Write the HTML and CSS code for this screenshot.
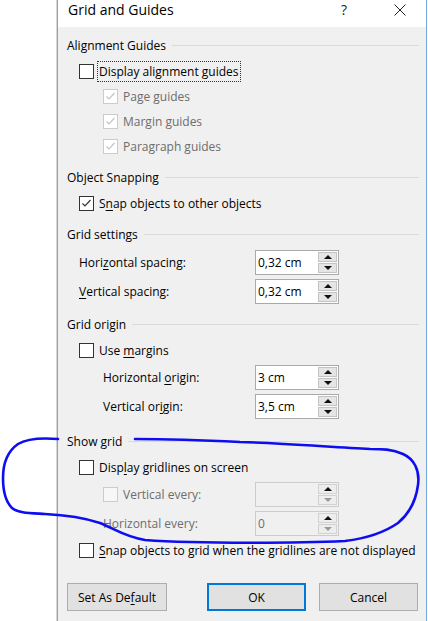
FILE: index.html
```html
<!DOCTYPE html>
<html>
<head>
<meta charset="utf-8">
<link rel="stylesheet" href="styles.css">
</head>
<body>
<div class="screen">
  <div class="strip"></div>
  <div class="dialog">
    <div class="titlebar">
      <span class="title">Grid and Guides</span>
      <span class="help">?</span>
      <svg class="close" width="12" height="12" viewBox="0 0 12 12"><path d="M0.5,0.5 L11.5,11.5 M11.5,0.5 L0.5,11.5" stroke="#222" stroke-width="1" fill="none"/></svg>
    </div>
    <div class="content">
      <section class="group">
        <div class="hdr"><span>Alignment Guides</span></div>
        <div class="cb"><span class="box"></span><span class="focus">Display alignment guides</span></div>
        <div class="cb ind dis"><span class="box"><svg width="13" height="13" viewBox="0 0 13 13"><path d="M2.5,6.5 L5,9 L10.5,3" stroke="#c4c4c4" stroke-width="1.2" fill="none"/></svg></span><span>Page guides</span></div>
        <div class="cb ind dis"><span class="box"><svg width="13" height="13" viewBox="0 0 13 13"><path d="M2.5,6.5 L5,9 L10.5,3" stroke="#c4c4c4" stroke-width="1.2" fill="none"/></svg></span><span>Margin guides</span></div>
        <div class="cb ind dis"><span class="box"><svg width="13" height="13" viewBox="0 0 13 13"><path d="M2.5,6.5 L5,9 L10.5,3" stroke="#c4c4c4" stroke-width="1.2" fill="none"/></svg></span><span>Paragraph guides</span></div>
      </section>
      <section class="group">
        <div class="hdr"><span>Object Snapping</span></div>
        <div class="cb"><span class="box"><svg width="13" height="13" viewBox="0 0 13 13"><path d="M2.5,6.5 L5,9 L10.5,3" stroke="#333" stroke-width="1.2" fill="none"/></svg></span><span>S<u>n</u>ap objects to other objects</span></div>
      </section>
      <section class="group">
        <div class="hdr"><span>Grid settings</span></div>
        <div class="spin">
          <span class="lbl"><span>Hori<u>z</u>ontal spacing:</span></span>
          <div class="field"><span class="val">0,32 cm</span><span class="arrows"><span class="ab"><i class="up"></i></span><span class="ab"><i class="down"></i></span></span></div>
        </div>
        <div class="spin">
          <span class="lbl"><span><u>V</u>ertical spacing:</span></span>
          <div class="field"><span class="val">0,32 cm</span><span class="arrows"><span class="ab"><i class="up"></i></span><span class="ab"><i class="down"></i></span></span></div>
        </div>
      </section>
      <section class="group">
        <div class="hdr"><span>Grid origin</span></div>
        <div class="cb"><span class="box"></span><span>Use <u>m</u>argins</span></div>
        <div class="spin">
          <span class="lbl ind"><span>Horizontal <u>o</u>rigin:</span></span>
          <div class="field"><span class="val">3 cm</span><span class="arrows"><span class="ab"><i class="up"></i></span><span class="ab"><i class="down"></i></span></span></div>
        </div>
        <div class="spin">
          <span class="lbl ind"><span>Vertical or<u>i</u>gin:</span></span>
          <div class="field"><span class="val">3,5 cm</span><span class="arrows"><span class="ab"><i class="up"></i></span><span class="ab"><i class="down"></i></span></span></div>
        </div>
      </section>
      <section class="group last">
        <div class="hdr"><span>Show grid</span></div>
        <div class="cb"><span class="box"></span><span>Disp<u>l</u>ay gridlines on screen</span></div>
        <div class="spin dis">
          <span class="lbl ind"><span class="box"></span><span>Vertical every:</span></span>
          <div class="field"><span class="val"></span><span class="arrows"><span class="ab"><i class="up"></i></span><span class="ab"><i class="down"></i></span></span></div>
        </div>
        <div class="spin dis">
          <span class="lbl ind"><span>Horizontal every:</span></span>
          <div class="field"><span class="val">0</span><span class="arrows"><span class="ab"><i class="up"></i></span><span class="ab"><i class="down"></i></span></span></div>
        </div>
        <div class="cb"><span class="box"></span><span><u>S</u>nap objects to grid when the gridlines are not displayed</span></div>
      </section>
      <div class="buttons">
        <button class="btn">Set As De<u>f</u>ault</button>
        <button class="btn ok">OK</button>
        <button class="btn cancel">Cancel</button>
      </div>
    </div>
  </div>
</div>
<svg class="ink" width="428" height="621" viewBox="0 0 428 621">
  <path d="M58,439 C45,438 28,438 18,444 C8,451 3,463 3,478 C3,492 6,502 12,508 C18,513 30,513 45,514 C65,515 85,518 100,523 C115,529 125,537 145,540 C200,544 300,543 345,541 C370,538 385,532 398,523 C410,513 416,500 418,485 C420,470 414,459 403,454 C392,449 382,449 370,449 C330,447 280,443 240,442 C200,440 160,439 135,439" stroke="#0d0df0" stroke-width="2.6" fill="none" stroke-linecap="round" stroke-linejoin="round"/>
</svg>
</body>
</html>
```

FILE: styles.css
```css
* { box-sizing: border-box; }
html, body { margin: 0; padding: 0; background: #fff; }
body {
  font-family: "Open Sans", "Noto Sans", sans-serif;
  font-size: 12px;
  color: #000;
  width: 428px;
  height: 621px;
  overflow: hidden;
  position: relative;
}
u { text-decoration: underline; text-underline-offset: 2px; }
.screen { display: flex; height: 621px; }
.strip { width: 57px; border-right: 1px solid #d6d6d6; background: #fff; }
.dialog {
  width: 370px;
  height: 621px;
  border-left: 1px solid #72a9e0;
  border-right: 1px solid #72a9e0;
  background: #f0f0f0;
  display: flex;
  flex-direction: column;
}
.titlebar {
  height: 27px;
  background: #fff;
  display: flex;
  align-items: flex-start;
}
.title { flex: 1; padding-left: 10px; font-size: 14px; line-height: 20px; }
.help { width: 12px; text-align: center; font-size: 14px; line-height: 20px; margin-right: 44px; color: #222; }
.close { margin-top: 4px; margin-right: 20px; }
.content { padding: 4px 7px 0 9px; display: flex; flex-direction: column; }
.group + .group { margin-top: 4px; }
.group.last { margin-top: 6px; }
.hdr { height: 28px; display: flex; align-items: center; gap: 6px; }
.hdr::after { content: ""; flex: 1; height: 1px; background: #dadada; }
.cb { height: 25px; display: flex; align-items: center; padding-left: 12px; white-space: nowrap; }
.cb.ind { padding-left: 36px; }
.box {
  width: 15px; height: 15px;
  border: 1px solid #333;
  background: #fff;
  margin-right: 5px;
  display: inline-flex; align-items: center; justify-content: center;
  flex: none;
}
.dis { color: #6d6d6d; }
.dis .box { border-color: #cccccc; background: #fff; }
.spin.dis .box { background: #f7f7f7; }
.focus { outline: 1px dotted #333; outline-offset: 0; padding: 1px 1px; margin-left: -1px; }
.spin { height: 29px; display: flex; align-items: center; }
.lbl { width: 188px; padding-left: 12px; display: flex; align-items: center; white-space: nowrap; }
.lbl.ind { padding-left: 36px; }
.field {
  width: 84px; height: 25px;
  border: 1px solid #aaaaaa;
  background: #fff;
  display: flex; align-items: center;
  padding: 1px 1px 1px 2px;
}
.spin.dis .field { background: #f0f0f0; border-color: #cccccc; }
.val { flex: 1; }
.spin.dis .val { color: #6d6d6d; }
.arrows { width: 19px; height: 21px; display: flex; flex-direction: column; gap: 1px; }
.ab {
  flex: 1;
  background: #e5e5e5;
  border: 1px solid #c3c3c3;
  display: flex; align-items: center; justify-content: center;
}
.spin.dis .ab { background: #ededed; border-color: #d2d2d2; }
.up { width: 0; height: 0; border-left: 4px solid transparent; border-right: 4px solid transparent; border-bottom: 4px solid #111; }
.down { width: 0; height: 0; border-left: 4px solid transparent; border-right: 4px solid transparent; border-top: 4px solid #111; }
.spin.dis .down { border-top-color: #9a9a9a; }
.buttons { display: flex; margin-top: 20px; }
.btn {
  height: 28px;
  width: 99px;
  font-family: inherit;
  font-size: 12px;
  color: #000;
  background: #e1e1e1;
  border: 1px solid #adadad;
  padding: 0;
}
.btn:first-child { width: 100px; }
.ok { margin-left: 40px; border: 1px solid #0078d7; box-shadow: inset 0 0 0 1px #0078d7; }
.cancel { margin-left: 13px; }
.ink { position: absolute; left: 0; top: 0; pointer-events: none; }
```
